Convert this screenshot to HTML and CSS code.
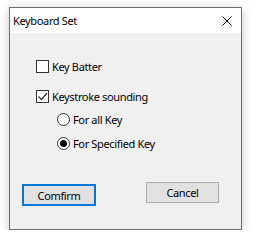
FILE: index.html
```html
<!DOCTYPE html>
<html lang="en">
<head>
    <title>Keyboard Set</title>
    <meta charset="UTF-8">
    <link rel="stylesheet" href="styles.css">
</head>
<body>
    <div class="window">
        <div class="titlebar">
            <span class="title">Keyboard Set</span>
            <svg class="close" width="10" height="10" viewBox="0 0 10 10">
                <path d="M0.5 0.5 L9.5 9.5 M9.5 0.5 L0.5 9.5" stroke="#000" stroke-width="1" fill="none"/>
            </svg>
        </div>
        <div class="content">
            <div class="row first">
                <span class="check"></span>
                <span class="label">Key Batter</span>
            </div>
            <div class="row second">
                <span class="check">
                    <svg width="11" height="11" viewBox="0 0 11 11">
                        <path d="M1.5 5.5 L4.5 8.5 L10 2" stroke="#333" stroke-width="1.2" fill="none"/>
                    </svg>
                </span>
                <span class="label">Keystroke sounding</span>
            </div>
            <div class="row radio-row third">
                <span class="radio"></span>
                <span class="label">For all Key</span>
            </div>
            <div class="row radio-row fourth">
                <span class="radio on"></span>
                <span class="label">For Specified Key</span>
            </div>
            <div class="buttons">
                <button class="btn default">Comfirm</button>
                <button class="btn">Cancel</button>
            </div>
        </div>
    </div>
</body>
</html>
```

FILE: styles.css
```css
body {
    margin: 0;
    background-color: #fff;
    font-family: "Noto Sans", "Open Sans", sans-serif;
    font-size: 11px;
    letter-spacing: -0.35px;
    color: #000;
}
.window {
    margin: 7px 0 0 9px;
    width: 233px;
    height: 223px;
    box-sizing: border-box;
    border: 1px solid #6e6e6e;
    background-color: #f0f0f0;
    box-shadow: 0 2px 10px rgba(0, 0, 0, 0.22);
    display: flex;
    flex-direction: column;
}
.titlebar {
    height: 25px;
    background-color: #fff;
    display: flex;
    align-items: center;
    justify-content: space-between;
    padding: 0 9px 0 3px;
}
.title {
    line-height: 14px;
}
.content {
    flex: 1;
    padding: 0 22px 0 12px;
    display: flex;
    flex-direction: column;
}
.row {
    display: flex;
    align-items: center;
    height: 13px;
    padding-left: 14px;
}
.first {
    margin-top: 27px;
}
.second {
    margin-top: 17px;
}
.third {
    margin-top: 10px;
}
.fourth {
    margin-top: 11px;
}
.radio-row {
    padding-left: 35px;
}
.check {
    width: 13px;
    height: 13px;
    box-sizing: border-box;
    border: 1px solid #333;
    background-color: #fff;
    display: flex;
    align-items: center;
    justify-content: center;
}
.radio {
    width: 13px;
    height: 13px;
    box-sizing: border-box;
    border: 1px solid #333;
    border-radius: 50%;
    background-color: #fff;
    display: flex;
    align-items: center;
    justify-content: center;
}
.radio.on::after {
    content: "";
    width: 7px;
    height: 7px;
    border-radius: 50%;
    background-color: #000;
}
.label {
    margin-left: 3px;
    line-height: 14px;
    white-space: nowrap;
}
.buttons {
    margin-top: 32px;
    display: flex;
    justify-content: space-between;
    align-items: flex-start;
}
.btn {
    font-family: inherit;
    font-size: 11px;
    letter-spacing: -0.35px;
    color: #000;
    background-color: #e1e1e1;
    border: 1px solid #adadad;
    width: 73px;
    height: 21px;
    padding: 0;
    margin: 0;
}
.btn.default {
    border: 2px solid #0078d7;
    width: 74px;
    height: 22px;
    margin-top: 2px;
}
```
